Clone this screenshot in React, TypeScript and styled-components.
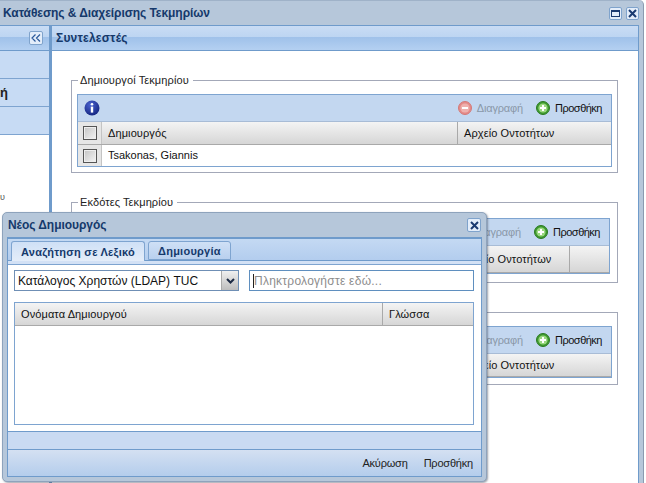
import React from 'react';
import styled, { createGlobalStyle } from 'styled-components';

const Global = createGlobalStyle`
  html, body { margin: 0; padding: 0; background: #fff; overflow: hidden; }
  * { box-sizing: border-box; }
  body { font-family: 'Liberation Sans', Arial, sans-serif; font-size: 11px; color: #111; }
`;

const Page = styled.div`
  position: relative;
  width: 646px;
  height: 483px;
  overflow: hidden;
  background: #fff;
`;

const Win = styled.div`
  width: 644px;
  height: 483px;
  display: flex;
  flex-direction: column;
  background: #b6c7da;
  padding-right: 4px;
  border-right: 1px solid #8a9bb0;
  border-top-right-radius: 5px;
`;

const WinTitle = styled.div`
  height: 25px;
  flex: none;
  display: flex;
  align-items: center;
  justify-content: space-between;
  padding: 0 0 0 3px;
  font-weight: bold;
  font-size: 12px;
  letter-spacing: -0.07px;
  color: #15396b;
  border-top: 1px solid #9fb2c8;
`;

const WinTools = styled.div`
  display: flex;
  gap: 4px;
`;

const ToolBtn = styled.div`
  width: 13px;
  height: 13px;
  background: #e3edfa;
  border: 1px solid #7fa3cc;
  border-radius: 2px;
  display: flex;
  align-items: center;
  justify-content: center;
`;

const ModalClose = styled(ToolBtn)`
  width: 14px;
  height: 14px;
  margin-right: 1px;
`;

const WinBody = styled.div`
  flex: 1;
  display: flex;
  min-height: 0;
  border-top: 1px solid #6f9bcb;
`;

const Side = styled.div`
  width: 49px;
  flex: none;
  display: flex;
  flex-direction: column;
  background: #fff;
  overflow: hidden;
`;

const PanelHead = styled.div`
  height: 25px;
  flex: none;
  display: flex;
  align-items: center;
  padding: 0 4px;
  font-weight: bold;
  font-size: 12px;
  letter-spacing: 0.2px;
  color: #15396b;
  background: linear-gradient(#c9dcf4 0, #bdd5f2 45%, #9fc1ea 46%, #b4d0f1 100%);
  border-bottom: 1px solid #6f9bcb;
`;

const SideHead = styled(PanelHead)`
  justify-content: flex-end;
  padding: 0 6px 0 0;
`;

const CollapseBtn = styled(ToolBtn)`
  width: 14px;
  height: 14px;
`;

const SideRow = styled.div`
  height: 28px;
  flex: none;
  background: #c7dbf4;
  border-bottom: 1px solid #7ea4d0;
  font-weight: bold;
  font-size: 13px;
  line-height: 27px;
  color: #222;
`;

const SideNote = styled.div`
  margin-top: 57px;
  font-size: 9px;
  color: #555;
`;

const Splitter = styled.div`
  width: 3px;
  flex: none;
  background: #6f9bcb;
`;

const Main = styled.div`
  flex: 1;
  min-width: 0;
  display: flex;
  flex-direction: column;
  border-right: 1px solid #6f9bcb;
`;

const Content = styled.div`
  flex: 1;
  background: #fff;
  padding: 22px 20px 0 19px;
  display: flex;
  flex-direction: column;
  gap: 22px;
`;

const Fieldset = styled.fieldset<{ $h: number }>`
  margin: 0;
  padding: 0 5px;
  height: ${(p) => p.$h}px;
  border: 1px solid #a3a8b8;
  min-width: 0;
`;

const Legend = styled.legend`
  margin-left: 1px;
  min-height: 14px;
  padding: 1px 4px 0 2px;
  font-size: 11px;
  line-height: 13px;
  letter-spacing: 0.1px;
  color: #222;
`;

const Grid = styled.div<{ $mr?: number; $mt?: number }>`
  margin-right: ${(p) => p.$mr ?? 0}px;
  margin-top: ${(p) => p.$mt ?? 7}px;
  border: 1px solid #7ea4d0;
  background: #fff;
`;

const Toolbar = styled.div`
  height: 27px;
  display: flex;
  align-items: center;
  padding: 0 9px 0 6px;
  background: #c3d7f0;
  border-bottom: 1px solid #a8bcd6;
`;

const Spacer = styled.div`
  flex: 1;
`;

const ToolAction = styled.div<{ $off?: boolean }>`
  display: flex;
  align-items: center;
  gap: 5px;
  margin-left: 13px;
  font-size: 11px;
  letter-spacing: ${(p) => (p.$off ? -0.15 : -0.5)}px;
  color: ${(p) => (p.$off ? '#8a97a8' : '#111')};
`;

const HeadRow = styled.div<{ $h?: number }>`
  height: ${(p) => p.$h ?? 23}px;
  display: flex;
  background: linear-gradient(#f4f4f4, #d6d6d6);
  border-bottom: 1px solid #a9a9a9;
`;

const Cell = styled.div<{ $w?: number }>`
  ${(p) => (p.$w ? `width: ${p.$w}px; flex: none;` : 'flex: 1; min-width: 0;')}
  display: flex;
  align-items: center;
  padding: 0 6px;
  font-size: 11px;
  letter-spacing: 0.1px;
  color: #111;
  white-space: nowrap;
  overflow: hidden;
  & + & { border-left: 1px solid #a9a9a9; }
`;

const ValueCell = styled(Cell)`
  letter-spacing: 0;
  padding-bottom: 1px;
`;

const CheckCell = styled.div`
  width: 24px;
  flex: none;
  display: flex;
  align-items: center;
  justify-content: center;
  background: #e6e6e6;
  border-right: 1px solid #c4c4c4;
`;

const CheckBox = styled.div`
  width: 14px;
  height: 14px;
  border: 1px solid #555;
  background: linear-gradient(135deg, #c4c4c4, #f5f5f5);
  box-shadow: inset 0 0 0 1px #eee;
`;

const BodyRow = styled.div`
  height: 21px;
  display: flex;
  background: #fff;
`;

const Modal = styled.div`
  position: absolute;
  left: 2px;
  top: 212px;
  width: 485px;
  height: 270px;
  display: flex;
  flex-direction: column;
  padding: 0 4px 4px;
  background: #b6c7da;
  border: 1px solid #8ea3bc;
  border-radius: 5px;
  box-shadow: 1px 1px 2px rgba(60, 70, 90, 0.5);
`;

const ModalTitle = styled.div`
  height: 24px;
  flex: none;
  display: flex;
  align-items: center;
  justify-content: space-between;
  padding: 0 0 0 1px;
  font-weight: bold;
  font-size: 12px;
  letter-spacing: -0.05px;
  color: #15396b;
`;

const ModalInner = styled.div`
  flex: 1;
  min-height: 0;
  display: flex;
  flex-direction: column;
  border: 1px solid #6f9bcb;
  border-top-width: 2px;
  background: #c9daf2;
`;

const TabStrip = styled.div`
  height: 22px;
  flex: none;
  display: flex;
  align-items: flex-end;
  gap: 3px;
  padding-left: 3px;
  background: linear-gradient(#c4d9f3, #b3cdee);
  border-bottom: 1px solid #6f9bcb;
`;

const TabBand = styled.div`
  height: 4px;
  flex: none;
  background: #d3e1f5;
  border-bottom: 1px solid #7ea4d0;
`;

const Tab = styled.div<{ $active?: boolean }>`
  height: ${(p) => (p.$active ? 20 : 19)}px;
  margin-bottom: ${(p) => (p.$active ? -1 : 0)}px;
  padding: 0 9px;
  display: flex;
  align-items: center;
  font-weight: bold;
  font-size: 11px;
  letter-spacing: 0.25px;
  color: #15396b;
  background: ${(p) => (p.$active ? 'linear-gradient(#cfe0f6, #e4edf9)' : 'linear-gradient(#cfe0f6, #b9d0ee)')};
  border: 1px solid #7ea4d0;
  border-bottom: ${(p) => (p.$active ? 'none' : '1px solid #7ea4d0')};
  border-radius: 3px 3px 0 0;
`;

const TabBody = styled.div`
  flex: 1;
  min-height: 0;
  display: flex;
  flex-direction: column;
  gap: 11px;
  padding: 5px 7px 6px 6px;
  background: #fff;
  border-bottom: 1px solid #6f9bcb;
`;

const FormRow = styled.div`
  height: 21px;
  flex: none;
  display: flex;
  justify-content: space-between;
`;

const Combo = styled.div`
  width: 225px;
  display: flex;
  align-items: center;
  border: 1px solid #6f8fb5;
  font-size: 12px;
  color: #111;
  padding-left: 3px;
`;

const ComboText = styled.span`
  flex: 1;
  white-space: nowrap;
`;

const ComboArrow = styled.div`
  width: 17px;
  height: 100%;
  display: flex;
  align-items: center;
  justify-content: center;
  background: linear-gradient(#f0f0f0, #bdbdbd);
  border-left: 1px solid #aaa;
`;

const SearchBox = styled.div`
  width: 225px;
  display: flex;
  align-items: center;
  padding-left: 3px;
  border: 1px solid #5f8fbf;
  font-size: 12px;
  letter-spacing: 0.25px;
  color: #8d8d8d;
`;

const Caret = styled.span`
  width: 1px;
  height: 14px;
  background: #222;
`;

const ResultGrid = styled.div`
  flex: 1;
  min-height: 0;
  border: 1px solid #7ea4d0;
`;

const Strip = styled.div`
  height: 18px;
  flex: none;
  background: #c9daf2;
  border-bottom: 1px solid #6f9bcb;
`;

const Footer = styled.div`
  height: 26px;
  flex: none;
  display: flex;
  align-items: center;
  justify-content: flex-end;
  gap: 16px;
  padding: 0 8px 0 0;
  font-size: 11px;
  color: #222;
  background: linear-gradient(#d4e0f2, #b4cdec);
`;

const FooterBtn = styled.span`
  letter-spacing: -0.2px;
`;

const InfoIcon = () => (
  <svg width="16" height="16" viewBox="0 0 16 16">
    <defs>
      <radialGradient id="ib" cx="0.4" cy="0.3" r="0.8">
        <stop offset="0" stopColor="#4a63d0" />
        <stop offset="1" stopColor="#0f1f78" />
      </radialGradient>
    </defs>
    <circle cx="8" cy="8" r="7.5" fill="url(#ib)" />
    <circle cx="8" cy="4.3" r="1.3" fill="#fff" />
    <rect x="6.8" y="6.6" width="2.4" height="6" fill="#fff" />
  </svg>
);

const ActionIcon = ({ kind }: { kind: 'add' | 'del' }) => {
  const add = kind === 'add';
  return (
    <svg width="14" height="14" viewBox="0 0 14 14">
      <circle cx="7" cy="7" r="6.5" fill={add ? '#3f9a2f' : '#e58a88'} stroke={add ? '#2b7a22' : '#d27a78'} />
      <circle cx="7" cy="7" r="4.6" fill={add ? '#9ad880' : '#eeb0ad'} />
      <rect x="4" y="6" width="6" height="2" fill="#fff" />
      {add && <rect x="6" y="4" width="2" height="6" fill="#fff" />}
    </svg>
  );
};

const CloseIcon = () => (
  <svg width="9" height="9" viewBox="0 0 9 9">
    <path d="M1 1L8 8M8 1L1 8" stroke="#1a3a70" strokeWidth="2" />
  </svg>
);

const Actions = ({ info }: { info?: boolean }) => (
  <Toolbar>
    {info && <InfoIcon />}
    <Spacer />
    <ToolAction $off>
      <ActionIcon kind="del" />
      Διαγραφή
    </ToolAction>
    <ToolAction>
      <ActionIcon kind="add" />
      Προσθήκη
    </ToolAction>
  </Toolbar>
);

const App: React.FC = () => (
  <Page>
    <Global />
    <Win>
      <WinTitle>
        Κατάθεσης &amp; Διαχείρισης Τεκμηρίων
        <WinTools>
          <ToolBtn>
            <svg width="9" height="7" viewBox="0 0 9 7">
              <rect x="0.5" y="0.5" width="8" height="6" fill="none" stroke="#1a3a70" />
              <rect x="0" y="0" width="9" height="2" fill="#1a3a70" />
            </svg>
          </ToolBtn>
          <ToolBtn>
            <CloseIcon />
          </ToolBtn>
        </WinTools>
      </WinTitle>
      <WinBody>
        <Side>
          <SideHead>
            <CollapseBtn>
              <svg width="10" height="8" viewBox="0 0 10 8">
                <path d="M4.5 0.5L1 4L4.5 7.5M9 0.5L5.5 4L9 7.5" fill="none" stroke="#2b5a9c" strokeWidth="1.2" />
              </svg>
            </CollapseBtn>
          </SideHead>
          <SideRow />
          <SideRow>ή</SideRow>
          <SideRow />
          <SideNote>υ</SideNote>
        </Side>
        <Splitter />
        <Main>
          <PanelHead>Συντελεστές</PanelHead>
          <Content>
            <Fieldset $h={100}>
              <Legend>Δημιουργοί Τεκμηρίου</Legend>
              <Grid>
                <Actions info />
                <HeadRow>
                  <CheckCell>
                    <CheckBox />
                  </CheckCell>
                  <Cell>Δημιουργός</Cell>
                  <Cell $w={154}>Αρχείο Οντοτήτων</Cell>
                </HeadRow>
                <BodyRow>
                  <CheckCell>
                    <CheckBox />
                  </CheckCell>
                  <ValueCell>Tsakonas, Giannis</ValueCell>
                </BodyRow>
              </Grid>
            </Fieldset>
            <Fieldset $h={88}>
              <Legend>Εκδότες Τεκμηρίου</Legend>
              <Grid $mr={2} $mt={9}>
                <Actions />
                <HeadRow $h={27}>
                  <CheckCell>
                    <CheckBox />
                  </CheckCell>
                  <Cell />
                  <Cell $w={115}>Αρχείο Οντοτήτων</Cell>
                  <Cell $w={40} />
                </HeadRow>
              </Grid>
            </Fieldset>
            <Fieldset $h={80}>
              <Legend />
              <Grid>
                <Actions />
                <HeadRow>
                  <CheckCell>
                    <CheckBox />
                  </CheckCell>
                  <Cell />
                  <Cell $w={154}>Αρχείο Οντοτήτων</Cell>
                </HeadRow>
              </Grid>
            </Fieldset>
          </Content>
        </Main>
      </WinBody>
    </Win>
    <Modal>
      <ModalTitle>
        Νέος Δημιουργός
        <ModalClose>
          <CloseIcon />
        </ModalClose>
      </ModalTitle>
      <ModalInner>
        <TabStrip>
          <Tab $active>Αναζήτηση σε Λεξικό</Tab>
          <Tab>Δημιουργία</Tab>
        </TabStrip>
        <TabBand />
        <TabBody>
          <FormRow>
            <Combo>
              <ComboText>Κατάλογος Χρηστών (LDAP) TUC</ComboText>
              <ComboArrow>
                <svg width="9" height="6" viewBox="0 0 9 6">
                  <path d="M1 1L4.5 4.5L8 1" fill="none" stroke="#1c2a44" strokeWidth="2" />
                </svg>
              </ComboArrow>
            </Combo>
            <SearchBox>
              <Caret />
              Πληκτρολογήστε εδώ...
            </SearchBox>
          </FormRow>
          <ResultGrid>
            <HeadRow>
              <Cell>Ονόματα Δημιουργού</Cell>
              <Cell $w={91}>Γλώσσα</Cell>
            </HeadRow>
          </ResultGrid>
        </TabBody>
        <Strip />
        <Footer>
          <FooterBtn>Ακύρωση</FooterBtn>
          <FooterBtn>Προσθήκη</FooterBtn>
        </Footer>
      </ModalInner>
    </Modal>
  </Page>
);

export default App;
